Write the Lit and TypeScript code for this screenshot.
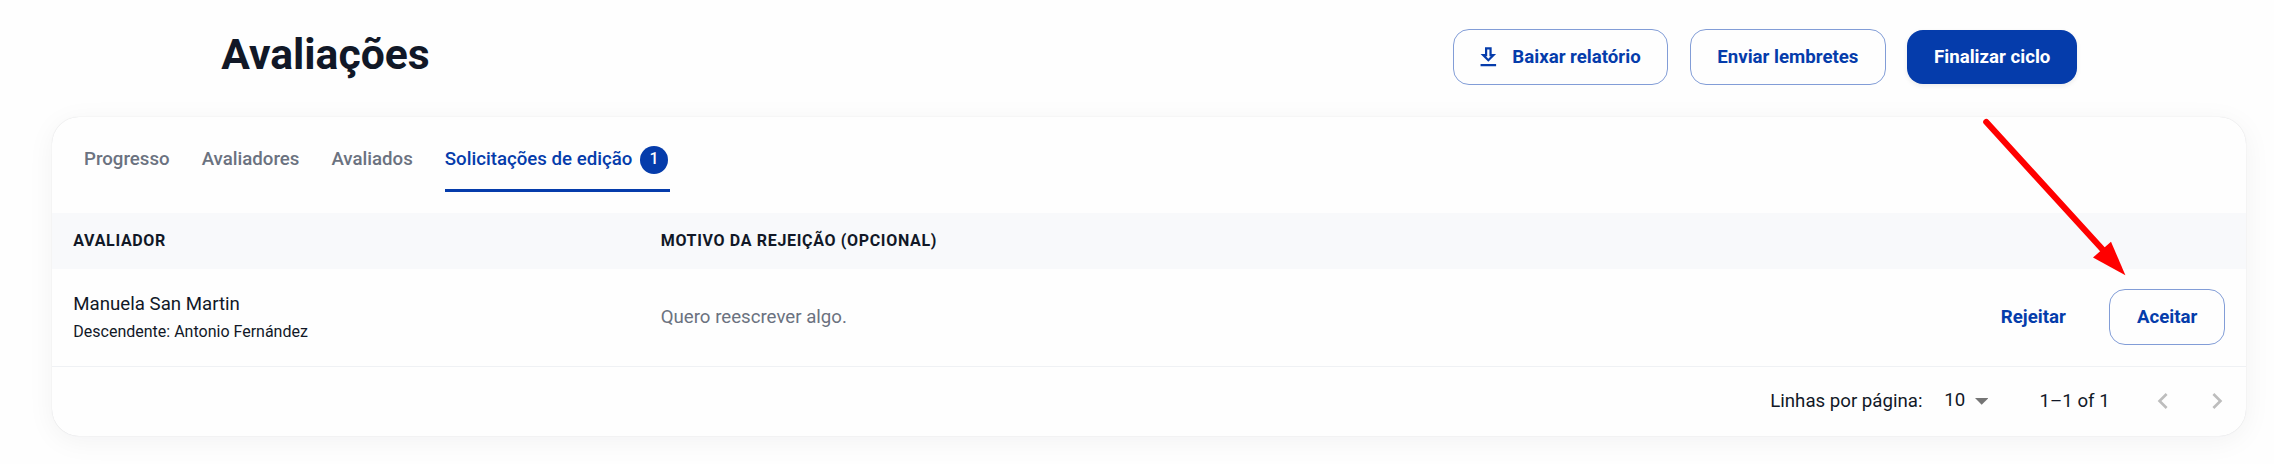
import { LitElement, html, css } from "lit";
import { customElement, state } from "lit/decorators.js";

interface Tab {
  label: string;
  badge?: number;
}

@customElement("app-root")
export class AppRoot extends LitElement {
  static styles = css`
    :host {
      display: block;
      box-sizing: border-box;
      height: 464px;
      padding: 29px 27.7px 0 52px;
      background: #fefefe;
      color: #111827;
      font: 400 18.667px/28px Roboto, sans-serif;
      position: relative;
      overflow: hidden;
    }
    .header {
      display: flex;
      justify-content: space-between;
      align-items: flex-start;
      height: 56px;
      padding: 0 169.3px 0 169.3px;
    }
    .title {
      margin: 0;
      font-size: 42.667px;
      line-height: 50px;
      font-weight: 700;
    }
    .actions {
      display: flex;
      align-items: center;
      gap: 21.3px;
    }
    .btn {
      box-sizing: border-box;
      display: flex;
      align-items: center;
      height: 56px;
      padding: 0 26.67px;
      border: 1px solid #829dd7;
      border-radius: 16px;
      background: none;
      color: #053cab;
      font: 700 18.667px/28px Roboto, sans-serif;
      white-space: nowrap;
    }
    .btn.filled {
      height: 54px;
      border: 0;
      background: #053cab;
      color: #fff;
      box-shadow: 0 2px 5px rgba(0, 0, 0, 0.08);
    }
    .btn.text {
      border-color: transparent;
    }
    .download {
      width: 26.67px;
      height: 26.67px;
      margin: 0 10.67px 0 -5.33px;
    }
    .card {
      margin-top: 32px;
      height: 319px;
      border-radius: 27px;
      background: #fefefe;
      box-shadow: 0 0 1px rgba(17, 24, 39, 0.18), 0 5px 28px rgba(17, 24, 39, 0.05);
      overflow: hidden;
    }
    .tabs {
      display: flex;
      gap: 32px;
      height: 75px;
      padding: 0 32px 21px;
    }
    .tab {
      box-sizing: border-box;
      display: flex;
      align-items: center;
      height: 75px;
      padding: 12px 0 0;
      border-bottom: 3px solid transparent;
      color: #6b7280;
      font-weight: 500;
    }
    .tab.active {
      color: #053cab;
      border-color: #053cab;
      padding-right: 2px;
    }
    .badge {
      width: 28px;
      height: 28px;
      margin: 2px 0 0 7.7px;
      border-radius: 50%;
      background: #053cab;
      color: #fff;
      font-size: 16px;
      line-height: 25px;
      text-align: center;
    }
    .row {
      display: grid;
      grid-template-columns: 587.4px 1fr auto;
      align-items: center;
      padding: 0 21.3px 0 21.33px;
    }
    .head {
      height: 55px;
      padding-bottom: 1px;
      background: #f8f9fb;
      font-size: 16px;
      line-height: 19px;
      font-weight: 700;
      letter-spacing: 0.667px;
    }
    .body {
      height: 97px;
      border-bottom: 1px solid #eff1f4;
    }
    .child {
      font-size: 16px;
      line-height: 27px;
    }
    .reason {
      margin-bottom: 1px;
      color: #6b7280;
    }
    .decisions {
      display: flex;
      gap: 15.8px;
      margin-bottom: 1px;
    }
    .footer {
      display: flex;
      justify-content: flex-end;
      align-items: center;
      height: 68px;
      padding-right: 13.4px;
    }
    .size {
      display: flex;
      align-items: center;
      margin: -2px 51.6px 0 21.8px;
    }
    .caret {
      width: 13.4px;
      height: 6.7px;
      margin: 3px 0 0 9.3px;
      fill: #757575;
    }
    .range {
      margin-right: 37.6px;
    }
    .chevron {
      width: 32px;
      height: 32px;
      fill: #bdbdbd;
    }
    .chevron + .chevron {
      margin-left: 21.7px;
    }
    .pointer {
      position: absolute;
      left: 1980px;
      top: 115px;
      width: 150px;
      height: 165px;
      pointer-events: none;
    }
  `;

  @state() private active = 3;

  private tabs: Tab[] = [
    { label: "Progresso" },
    { label: "Avaliadores" },
    { label: "Avaliados" },
    { label: "Solicitações de edição", badge: 1 },
  ];

  render() {
    return html`
      <header class="header">
        <h1 class="title">Avaliações</h1>
        <div class="actions">
          <button class="btn">
            <svg class="download" viewBox="0 0 24 24" fill="currentColor">
              <path d="M19 9h-4V3H9v6H5l7 7 7-7zm-8 2V5h2v6h1.17L12 13.17 9.83 11H11zm-6 7h14v2H5z" />
            </svg>
            Baixar relatório
          </button>
          <button class="btn">Enviar lembretes</button>
          <button class="btn filled">Finalizar ciclo</button>
        </div>
      </header>
      <section class="card">
        <nav class="tabs">
          ${this.tabs.map(
            (tab, i) => html`<div class="tab ${i === this.active ? "active" : ""}" @click=${() => (this.active = i)}>
              ${tab.label}${tab.badge ? html`<span class="badge">${tab.badge}</span>` : ""}
            </div>`
          )}
        </nav>
        <div class="row head">
          <span>AVALIADOR</span>
          <span>MOTIVO DA REJEIÇÃO (OPCIONAL)</span>
        </div>
        <div class="row body">
          <div>
            <div>Manuela San Martin</div>
            <div class="child">Descendente: Antonio Fernández</div>
          </div>
          <div class="reason">Quero reescrever algo.</div>
          <div class="decisions">
            <button class="btn text">Rejeitar</button>
            <button class="btn">Aceitar</button>
          </div>
        </div>
        <footer class="footer">
          <span>Linhas por página:</span>
          <span class="size">
            10
            <svg class="caret" viewBox="0 0 10 5"><path d="M0 0l5 5 5-5z" /></svg>
          </span>
          <span class="range">1–1 of 1</span>
          <svg class="chevron" viewBox="0 0 24 24"><path d="M15.41 16.59L10.83 12l4.58-4.59L14 6l-6 6 6 6z" /></svg>
          <svg class="chevron" viewBox="0 0 24 24"><path d="M8.59 16.59L13.17 12 8.59 7.41 10 6l6 6-6 6z" /></svg>
        </footer>
      </section>
      <svg class="pointer" viewBox="1980 115 150 165">
        <path d="M1986.3 122L2104 251" stroke="#f00" stroke-width="6.2" stroke-linecap="round" />
        <path d="M2111 241.7L2125.4 275.3L2093 257.5Z" fill="#f00" />
      </svg>
    `;
  }
}
